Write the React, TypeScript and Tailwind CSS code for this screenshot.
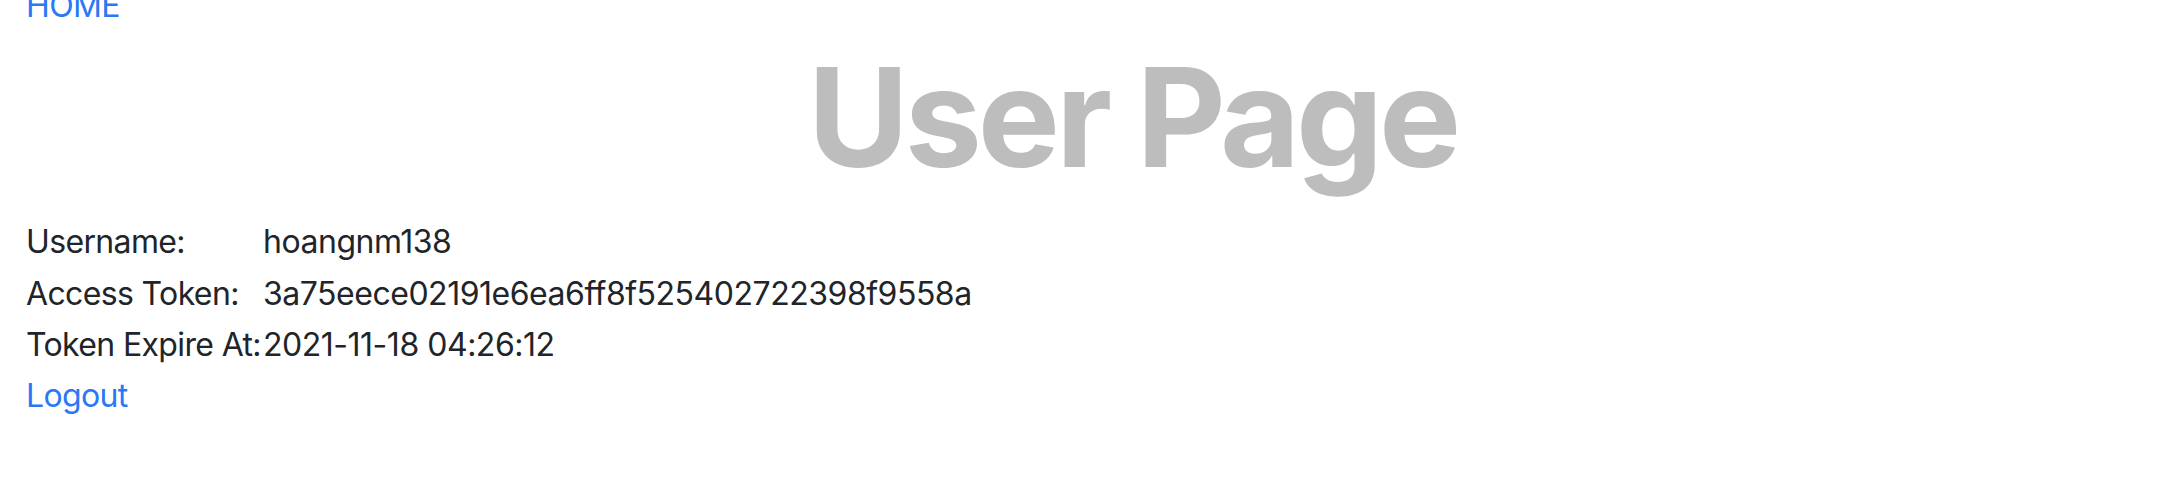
const rows = [
  { label: "Username:", value: "hoangnm138" },
  { label: "Access Token:", value: "3a75eece02191e6ea6ff8f525402722398f9558a" },
  { label: "Token Expire At:", value: "2021-11-18 04:26:12" },
];

export default function App() {
  return (
    <div className="min-h-screen bg-white px-[26px] font-['Inter',sans-serif] text-[32px] tracking-[-0.02em] text-[#212529]">
      <a href="#" className="-mt-[18px] block leading-[48px] text-[#2a78f5]">
        HOME
      </a>

      <h1 className="mt-[18px] pl-[107px] text-center text-[138px] font-bold leading-none tracking-[-0.03em] text-[#bdbdbd]">
        User Page
      </h1>

      <div className="mt-[30px] grid grid-cols-[237px_1fr] leading-[51.5px]">
        {rows.map((row) => (
          <div key={row.label} className="contents">
            <div className="whitespace-nowrap">{row.label}</div>
            <div className="tracking-[-0.015em]">{row.value}</div>
          </div>
        ))}
      </div>

      <a href="#" className="-mt-[1px] block leading-[51.5px] text-[#2a78f5]">
        Logout
      </a>
    </div>
  );
}
